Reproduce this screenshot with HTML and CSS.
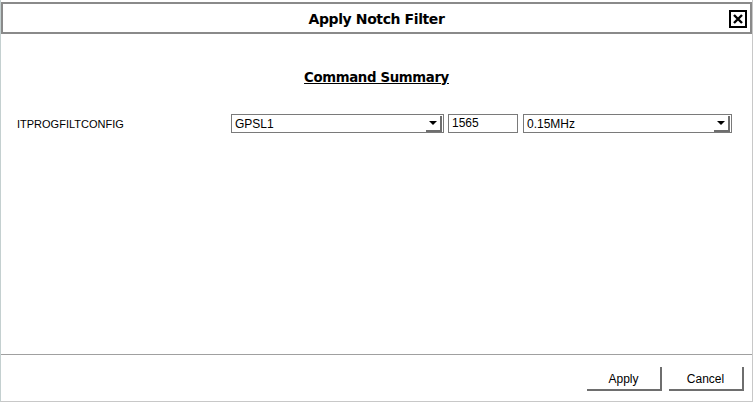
FILE: index.html
```html
<!DOCTYPE html>
<html lang="en">
<head>
    <meta charset="UTF-8">
    <title>Apply Notch Filter</title>
    <link rel="stylesheet" href="styles.css">
</head>
<body>
    <div class="dialog">
        <div class="title-bar">
            <span class="title">Apply Notch Filter</span>
            <button class="close-btn" title="Close">
                <svg width="10" height="10" viewBox="0 0 10 10">
                    <path d="M1 1 L9 9 M9 1 L1 9" stroke="#000" stroke-width="2.4"/>
                </svg>
            </button>
        </div>

        <div class="content">
            <h2 class="summary-title">Command Summary</h2>
            <div class="command-row">
                <span class="command-name">ITPROGFILTCONFIG</span>
                <div class="select-box wide">
                    <span>GPSL1</span>
                    <span class="arrow"></span>
                </div>
                <div class="text-box">1565</div>
                <div class="select-box mid">
                    <span>0.15MHz</span>
                    <span class="arrow"></span>
                </div>
            </div>
        </div>

        <div class="footer">
            <button class="dlg-btn">Apply</button>
            <button class="dlg-btn">Cancel</button>
        </div>
    </div>
</body>
</html>
```

FILE: styles.css
```css
* {
    margin: 0;
    padding: 0;
    box-sizing: border-box;
}

body {
    font-family: 'Liberation Sans', Arial, sans-serif;
    font-size: 11px;
    color: #000;
    background: #ffffff;
    width: 756px;
    height: 402px;
    overflow: hidden;
}

.dialog {
    width: 753px;
    height: 402px;
    display: flex;
    flex-direction: column;
    border-left: 1px solid #c4d0d0;
    border-right: 1px solid #c8c8c8;
    border-bottom: 1px solid #c8c8c8;
}

/* 타이틀 바 */
.title-bar {
    margin-top: 2px;
    height: 32px;
    border: 2px solid #8a8a8a;
    display: flex;
    align-items: center;
    justify-content: center;
    position: relative;
}

.title {
    font-family: 'DejaVu Sans', Verdana, sans-serif;
    font-weight: bold;
    font-size: 14px;
    letter-spacing: -0.4px;
    padding-top: 1px;
}

.close-btn {
    position: absolute;
    right: 3px;
    top: 6px;
    width: 18px;
    height: 18px;
    border: 2px solid #000;
    background: #fff;
    display: flex;
    align-items: center;
    justify-content: center;
}

/* 본문 */
.content {
    flex: 1;
    padding: 36px 0 0 16px;
}

.summary-title {
    text-align: center;
    font-family: 'DejaVu Sans', Verdana, sans-serif;
    font-size: 13.3px;
    letter-spacing: -0.35px;
    text-decoration: underline;
    margin-left: -16px;
    margin-bottom: 29px;
}

.command-row {
    display: flex;
    align-items: center;
}

.command-name {
    width: 214px;
}

.select-box {
    height: 19px;
    border: 1px solid #7a7a7a;
    display: flex;
    align-items: center;
    justify-content: space-between;
    padding-left: 3px;
    background: #fff;
    font-size: 12px;
}

.select-box.wide {
    width: 213px;
}

.select-box.mid {
    width: 209px;
}

.arrow {
    width: 16px;
    height: 16px;
    margin-right: 1px;
    border-right: 2px solid #6e6e6e;
    border-bottom: 2px solid #6e6e6e;
    position: relative;
}

.arrow::after {
    content: '';
    position: absolute;
    left: 3px;
    top: 5px;
    border-left: 4px solid transparent;
    border-right: 4px solid transparent;
    border-top: 4px solid #000;
}

.text-box {
    width: 70px;
    height: 19px;
    margin: 0 5px 0 4px;
    border: 1px solid #7a7a7a;
    padding-left: 3px;
    line-height: 17px;
    font-size: 12px;
}

/* 하단 버튼 */
.footer {
    height: 47px;
    border-top: 1px solid #a0a0a0;
    display: flex;
    justify-content: flex-end;
    align-items: flex-start;
    gap: 7px;
    padding: 12px 8px 0 0;
}

.dlg-btn {
    width: 75px;
    height: 24px;
    font-family: 'Liberation Sans', Arial, sans-serif;
    font-size: 12px;
    background: #fff;
    border: none;
    border-right: 2px solid #6e6e6e;
    border-bottom: 2px solid #6e6e6e;
    padding-top: 2px;
}
```
